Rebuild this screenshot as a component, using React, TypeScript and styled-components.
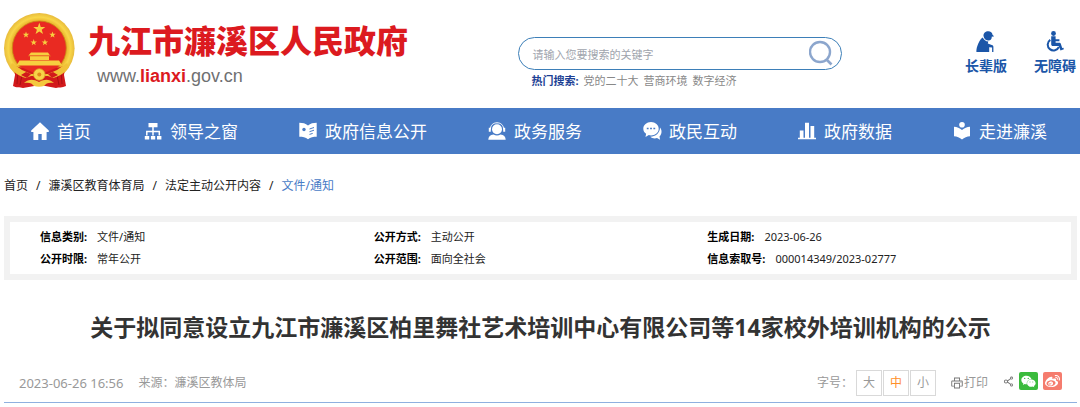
import React from "react";
import styled, { createGlobalStyle, css } from "styled-components";
import { FaWeibo, FaWeixin } from "react-icons/fa";
import { AiOutlinePrinter, AiOutlineShareAlt } from "react-icons/ai";

const GlobalStyle = createGlobalStyle`
  *, *::before, *::after { box-sizing: border-box; }
  body {
    margin: 0;
    background: #fff;
    color: #222;
    font-family: "Noto Sans", "Noto Sans CJK SC", sans-serif;
    font-size: 12px;
    line-height: 18px;
  }
  a { color: inherit; text-decoration: none; }
  button, input { font: inherit; }
`;

const Header = styled.header`
  display: grid;
  grid-template-columns: 48% 30% 22%;
  height: 108px;
`;

const Brand = styled.a`
  display: flex;
  align-items: flex-start;
  gap: 12px;
  padding: 13px 0 0 4px;
`;

const BrandText = styled.div`
  padding-top: 2px;
`;

const SiteName = styled.div`
  color: #dc1a1f;
  font-family: "Noto Sans CJK SC", sans-serif;
  font-size: 32px;
  font-weight: 900;
  line-height: 48px;
  white-space: nowrap;
`;

const SiteUrl = styled.div`
  padding-left: 9px;
  color: #6f7072;
  font-family: "Liberation Sans", sans-serif;
  font-size: 18px;
  line-height: 26px;

  b { color: #dc1a1f; }
`;

const SearchArea = styled.div`
  padding-top: 37px;
`;

const SearchForm = styled.form`
  display: flex;
  align-items: center;
  height: 33px;
  padding: 0 8px 0 13px;
  border: 1px solid #3d7fb8;
  border-radius: 17px;
`;

const SearchInput = styled.input`
  flex: 1;
  min-width: 0;
  padding: 3px 0 0;
  border: 0;
  outline: 0;
  background: none;
  color: #555;
  font-size: 11px;

  &::placeholder { color: #a0a4ad; opacity: 1; }
`;

const SearchButton = styled.button`
  display: flex;
  padding: 0 0 2px;
  border: 0;
  background: none;
  color: #8ca6cd;
  cursor: pointer;
`;

const HotSearch = styled.div`
  display: flex;
  gap: 5px;
  padding: 3px 0 0 13px;
  color: #888;
  font-size: 11px;
  line-height: 16px;
  white-space: nowrap;

  b { color: #1c3f94; }
`;

const Access = styled.div`
  display: flex;
  justify-content: flex-end;
  gap: 27px;
  padding: 31px 4px 0 0;
`;

const AccessLink = styled.a`
  display: flex;
  flex-direction: column;
  align-items: center;
  gap: 4px;
  color: #1b56a8;
  font-size: 14px;
  font-weight: 700;
  line-height: 20px;
`;

const Nav = styled.nav`
  display: flex;
  align-items: center;
  justify-content: space-between;
  height: 46px;
  padding: 2px 33px 0 31px;
  background: #487bc6;
`;

const NavLink = styled.a<{ $first?: boolean }>`
  display: flex;
  align-items: center;
  gap: 7px;
  color: #fff;
  font-size: 17px;
  line-height: 26px;
  white-space: nowrap;
  ${(p) => p.$first && css`margin-right: -8px;`}

  svg { margin-bottom: 2px; }
`;

const Breadcrumb = styled.nav`
  display: flex;
  gap: 8px;
  padding: 23px 4px 0;
`;

const Crumb = styled.a<{ $current?: boolean }>`
  color: ${(p) => (p.$current ? "#487bc6" : "#222")};
`;

const Main = styled.main`
  padding: 0 3px 0 4px;
`;

const InfoBox = styled.dl`
  display: grid;
  grid-template-columns: repeat(3, 1fr);
  margin: 21px 0 0;
  padding: 4px 30px;
  border: 6px solid #f2f2f2;
`;

const InfoItem = styled.div`
  display: flex;
  gap: 10px;
  color: #222;
  font-size: 11px;
  line-height: 22px;

  dt { color: #000; font-weight: 700; }
  dd { margin: 0; }
`;

const Title = styled.h1`
  margin: 30px 0 0;
  color: #333;
  font-size: 23px;
  font-weight: 700;
  line-height: 34px;
  text-align: center;
`;

const Meta = styled.div`
  display: flex;
  align-items: center;
  justify-content: space-between;
  margin-top: 26px;
  padding: 0 15px 6px;
  border-bottom: 1px solid #8fb0df;
  color: #999;
`;

const Group = styled.div<{ $gap: number }>`
  display: flex;
  align-items: center;
  gap: ${(p) => p.$gap}px;
`;

const PublishTime = styled.time`
  font-size: 13px;
`;

const SizeButton = styled.button<{ $active?: boolean }>`
  width: 26px;
  height: 26px;
  padding: 0;
  border: 1px solid #d9d9d9;
  background: #fff;
  color: ${(p) => (p.$active ? "#ff8f2b" : "#999")};
  cursor: pointer;
`;

const PrintButton = styled.button`
  display: flex;
  align-items: center;
  padding: 0;
  border: 0;
  background: none;
  color: #999;
  cursor: pointer;

  svg { color: #777; }
`;

const ShareLink = styled.a<{ $color: string }>`
  display: flex;
  align-items: center;
  justify-content: center;
  width: 19px;
  height: 18px;
  border-radius: 2px;
  background: ${(p) => p.$color};
  color: #fff;
`;

const ShareGroup = styled(Group)`
  padding-bottom: 4px;
`;

const star = (cx: number, cy: number, r: number) =>
  Array.from({ length: 10 }, (_, i) => {
    const a = (Math.PI / 5) * i - Math.PI / 2;
    const d = i % 2 ? r * 0.4 : r;
    return `${(cx + d * Math.cos(a)).toFixed(2)},${(cy + d * Math.sin(a)).toFixed(2)}`;
  }).join(" ");

const Emblem = () => (
  <svg width="72" height="76" viewBox="0 0 72 76" aria-hidden="true">
    <defs>
      <radialGradient id="gold" cx="50%" cy="50%" r="50%">
        <stop offset="0.76" stopColor="#e9b02a" />
        <stop offset="0.88" stopColor="#f8d648" />
        <stop offset="1" stopColor="#e8bb3c" />
      </radialGradient>
    </defs>
    <circle cx="35.3" cy="35.3" r="35.3" fill="url(#gold)" />
    <circle cx="35.3" cy="35" r="27" fill="#e92a22" stroke="#c98a17" strokeWidth="0.8" />
    <g fill="#f7cf3f">
      <polygon points={star(35.3, 16, 6.3)} />
      <polygon points={star(22, 21.8, 3.4)} />
      <polygon points={star(48.5, 21.8, 3.4)} />
      <polygon points={star(29.7, 29.5, 3.4)} />
      <polygon points={star(40.9, 29.5, 3.4)} />
      <path d="M27 39.500h17l2 3H24.500zM26 43h19v4H26zM15.500 47.500h39.600l3 5H12.500z" />
    </g>
    <path d="M24 43h23" stroke="#e07b1c" strokeWidth="0.6" />
    <path d="M10 53l9 2 16 7 17-7 9-2-1 9 2 11c-4 2-7 1-10 2l-16-3-17 3c-3-1-7 0-10-2l2-11z" fill="#d2191b" />
    <path d="M14 57l-1 14M57 57l1 14M18 62l-2 10M53 62l2 10" stroke="#a90f14" strokeWidth="1" />
    <path d="M8 50l10 7 9 4h17l9-4 10-7 2 4c-4 6-9 9-16 11l-5-2H27l-5 2C15 63 10 60 6 54z" fill="#f1c238" />
    <path d="M22 59l5 2-4 4-6-3zM49 59l-5 2 4 4 6-3z" fill="#d2191b" />
    <circle cx="35.300" cy="61.500" r="5.800" fill="#f7d348" stroke="#d99a20" strokeWidth="0.800" />
    <circle cx="35.300" cy="61.500" r="2" fill="#e08a1c" />
    <path d="M20 70c5-4 9-4 15-1 6-3 10-3 15 1-5-1-8 0-10 3-3 1-7 1-10 0-2-3-5-4-10-3z" fill="#f4c83d" />
  </svg>
);

const SearchIcon = () => (
  <svg width="24" height="26" viewBox="0 0 24 26" fill="none" stroke="currentColor" aria-hidden="true">
    <circle cx="11" cy="12" r="10" strokeWidth="2.400" />
    <path d="M17.500 19.500l5 5" strokeWidth="2.600" />
  </svg>
);

const ElderIcon = () => (
  <svg width="19" height="21" viewBox="0 0 19 21" fill="currentColor" aria-hidden="true">
    <path d="M7.500 5C7.300 2 9.500.3 12.300.3c2.400 0 4 1.400 4.200 3.400l1.300 1.200-.4.800-1.600-.2c.1 2.500-1.200 4-3.200 4-2.300 0-4.700-1.500-5.100-4.500z" />
    <path d="M6.800 6.400c.9 2.300 2.900 3.900 5.500 4.200l-.5 2 4.600 1.700c.8.400 1 1 1 1.700V21h-1.300v-4.500l-2.900-.3V21H.4C.2 18.500 1 15.500 2.300 12.600 3.300 9.800 4.800 7.500 6.800 6.400z" />
  </svg>
);

const WheelchairIcon = () => (
  <svg width="18" height="21" viewBox="0 0 18 21" fill="none" stroke="currentColor" aria-hidden="true">
    <circle cx="7.500" cy="2.500" r="2.400" fill="currentColor" stroke="none" />
    <path d="M5.200 5.200h4.400v3h3.800v2H9.600v1.600h3.600c.9 0 1.500.4 1.700 1.200l1.300 4 1.200-.3.500 1.600-3.400 1.100-1.700-4.400H7c-1.200 0-1.800-.7-1.800-1.800z" fill="currentColor" stroke="none" />
    <path d="M4.300 8.800a5.800 5.800 0 1 0 8.600 7" strokeWidth="2" />
  </svg>
);

const icons: Record<string, React.ReactNode> = {
  home: <path d="M9 .3L.2 8.600v1.500h2.200V18h4.900v-6h3.400v6h4.900v-7.900h2.200V8.600z" />,
  sitemap: (
    <>
      <path d="M4.500 1h9v4.300h-9zM.8 14h4.400v3.500H.8zM6.900 14h4.300v3.500H6.900zM13 14h4.400v3.500H13z" />
      <path d="M9 5v8.500M2.800 13.500V9.500h12.500v4" fill="none" stroke="#fff" strokeWidth="1.500" />
    </>
  ),
  book: (
    <>
      <path d="M.3.800C3.800.8 6.500 1.400 9 3.500 11.500 1.400 14.200.8 17.700.8v14c-3.500 0-6.200.6-8.700 2.500-2.500-1.900-5.200-2.500-8.700-2.500z" />
      <circle cx="5" cy="7.500" r="1.700" fill="#487bc6" />
      <path d="M10.500 7l4.500-1.500M10.500 9.700L15 8.200M10.500 12.400l3.200-1" fill="none" stroke="#487bc6" strokeWidth="1" />
    </>
  ),
  service: (
    <>
      <circle cx="9" cy="7.200" r="5" />
      <path d="M2.400 7.500C2.400 3 5.200.8 9 .8s6.600 2.200 6.600 6.700" fill="none" stroke="#fff" strokeWidth="1" />
      <path d="M.8 5.800h2v4h-2zM15.200 5.800h2v4h-2zM.3 17.800c0-3.300 2-4.800 5.200-5.300 2 1.200 5 1.200 7 0 3.200.5 5.200 2 5.200 5.300z" />
    </>
  ),
  chat: (
    <>
      <path d="M8 0c4.300 0 7.700 3 7.700 6.700 0 3.800-3.400 6.700-7.700 6.700-.8 0-1.500-.1-2.200-.3L2.500 15l.6-3.200C1.400 10.600.3 8.800.3 6.700.3 3 3.700 0 8 0z" />
      <path d="M17 5.500c2.300 2.800 1.900 6.600-.5 8.900l.6 3.300-3.100-1.600c-2.500.7-5 .2-6.700-1.300 5.200 0 9.700-3.800 9.700-9.300z" />
      <path d="M3.800 6.500h1.800M7.100 6.500h1.800M10.400 6.500h1.800" stroke="#487bc6" strokeWidth="1.600" />
    </>
  ),
  chart: <path d="M1.800 8.500h3.700v7.300H1.800zM7 .8h4v15H7zM12.500 4h3.700v11.800h-3.700zM0 15.800h18v1.500H0z" />,
  reader: (
    <>
      <circle cx="9" cy="2.800" r="2.800" />
      <path d="M1 4.800c3 .2 5.700 1.200 8 3.200 2.300-2 5-3 8-3.200v9.500c-3 .3-5.700 1.200-8 3.200-2.300-2-5-2.900-8-3.200z" />
    </>
  ),
};

const navItems = [
  ["home", "首页"],
  ["sitemap", "领导之窗"],
  ["book", "政府信息公开"],
  ["service", "政务服务"],
  ["chat", "政民互动"],
  ["chart", "政府数据"],
  ["reader", "走进濂溪"],
];

const crumbs = ["首页", "濂溪区教育体育局", "法定主动公开内容", "文件/通知"];

const info = [
  ["信息类别:", "文件/通知"],
  ["公开方式:", "主动公开"],
  ["生成日期:", "2023-06-26"],
  ["公开时限:", "常年公开"],
  ["公开范围:", "面向全社会"],
  ["信息索取号:", "000014349/2023-02777"],
];

export default function App() {
  return (
    <>
      <GlobalStyle />
      <Header>
        <Brand href="#">
          <Emblem />
          <BrandText>
            <SiteName>九江市濂溪区人民政府</SiteName>
            <SiteUrl>www.<b>lianxi</b>.gov.cn</SiteUrl>
          </BrandText>
        </Brand>
        <SearchArea>
          <SearchForm role="search">
            <SearchInput aria-label="搜索" placeholder="请输入您要搜索的关键字" />
            <SearchButton type="button" aria-label="搜索"><SearchIcon /></SearchButton>
          </SearchForm>
          <HotSearch>
            <b>热门搜索:</b>
            <a href="#">党的二十大</a>
            <a href="#">营商环境</a>
            <a href="#">数字经济</a>
          </HotSearch>
        </SearchArea>
        <Access>
          <AccessLink href="#"><ElderIcon />长辈版</AccessLink>
          <AccessLink href="#"><WheelchairIcon />无障碍</AccessLink>
        </Access>
      </Header>
      <Nav>
        {navItems.map(([icon, label], i) => (
          <NavLink href="#" key={label} $first={i === 0}>
            <svg width="19" height="18" viewBox="0 0 19 18" fill="#fff" aria-hidden="true">{icons[icon]}</svg>
            {label}
          </NavLink>
        ))}
      </Nav>
      <Breadcrumb>
        {crumbs.map((label, i) => (
          <React.Fragment key={label}>
            {i > 0 && <span>/</span>}
            <Crumb href="#" $current={i === crumbs.length - 1}>{label}</Crumb>
          </React.Fragment>
        ))}
      </Breadcrumb>
      <Main>
        <InfoBox>
          {info.map(([name, value]) => (
            <InfoItem key={name}><dt>{name}</dt><dd>{value}</dd></InfoItem>
          ))}
        </InfoBox>
        <Title>关于拟同意设立九江市濂溪区柏里舞社艺术培训中心有限公司等14家校外培训机构的公示</Title>
        <Meta>
          <Group $gap={15}>
            <PublishTime>2023-06-26 16:56</PublishTime>
            <span>来源：濂溪区教体局</span>
          </Group>
          <Group $gap={14}>
            <Group $gap={3}>
              <span>字号：</span>
              <Group $gap={1}>
                <SizeButton type="button">大</SizeButton>
                <SizeButton type="button" $active>中</SizeButton>
                <SizeButton type="button">小</SizeButton>
              </Group>
            </Group>
            <PrintButton type="button"><AiOutlinePrinter size={14} />打印</PrintButton>
            <ShareGroup $gap={4}>
              <AiOutlineShareAlt size={13} color="#777" />
              <Group $gap={5}>
                <ShareLink href="#" $color="#3abb3c" aria-label="微信"><FaWeixin size={15} /></ShareLink>
                <ShareLink href="#" $color="#f57c6e" aria-label="微博"><FaWeibo size={15} /></ShareLink>
              </Group>
            </ShareGroup>
          </Group>
        </Meta>
      </Main>
    </>
  );
}
